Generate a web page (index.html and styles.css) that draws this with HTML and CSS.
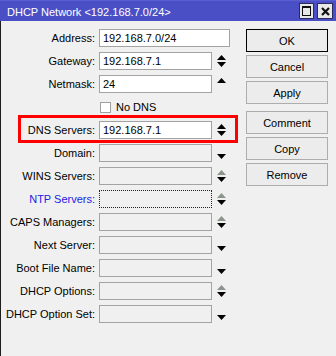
FILE: index.html
```html
<!DOCTYPE html>
<html lang="en">
<head>
    <meta charset="UTF-8">
    <title>DHCP Network</title>
    <link rel="stylesheet" href="styles.css">
</head>
<body>

    <div class="window">
        <div class="titlebar">
            <span class="title">DHCP Network &lt;192.168.7.0/24&gt;</span>
            <div class="title-buttons">
                <span class="tbtn"><span class="max-icon"></span></span>
                <span class="tbtn">
                    <svg width="9" height="9" viewBox="0 0 9 9"><path d="M1 1 L8 8 M8 1 L1 8" stroke="#111" stroke-width="2.2"/></svg>
                </span>
            </div>
        </div>

        <div class="content">
            <div class="form">
                <div class="row">
                    <label>Address:</label>
                    <div class="field wide">192.168.7.0/24</div>
                </div>
                <div class="row">
                    <label>Gateway:</label>
                    <div class="field">192.168.7.1</div>
                    <div class="arrows"><svg width="9" height="13" viewBox="0 0 9 13"><polygon points="0,5 4.5,0 9,5" fill="#000"/><polygon points="0,7 9,7 4.5,12" fill="#000"/></svg></div>
                </div>
                <div class="row">
                    <label>Netmask:</label>
                    <div class="field">24</div>
                    <div class="arrows"><svg width="9" height="13" viewBox="0 0 9 13"><polygon points="0,5 4.5,0 9,5" fill="#000"/></svg></div>
                </div>
                <div class="row">
                    <label></label>
                    <div class="check"><span class="box"></span>No DNS</div>
                </div>
                <div class="row">
                    <label>DNS Servers:</label>
                    <div class="field">192.168.7.1</div>
                    <div class="arrows"><svg width="9" height="13" viewBox="0 0 9 13"><polygon points="0,5 4.5,0 9,5" fill="#000"/><polygon points="0,7 9,7 4.5,12" fill="#000"/></svg></div>
                </div>
                <div class="row">
                    <label>Domain:</label>
                    <div class="field empty"></div>
                    <div class="arrows"><svg width="9" height="13" viewBox="0 0 9 13"><polygon points="0,7 9,7 4.5,12" fill="#000"/></svg></div>
                </div>
                <div class="row">
                    <label>WINS Servers:</label>
                    <div class="field empty"></div>
                    <div class="arrows"><svg width="9" height="13" viewBox="0 0 9 13"><polygon points="0,5 4.5,0 9,5" fill="#8c958c"/><polygon points="0,7 9,7 4.5,12" fill="#000"/></svg></div>
                </div>
                <div class="row">
                    <label class="link">NTP Servers:</label>
                    <div class="field empty focus"></div>
                    <div class="arrows"><svg width="9" height="13" viewBox="0 0 9 13"><polygon points="0,5 4.5,0 9,5" fill="#8c958c"/><polygon points="0,7 9,7 4.5,12" fill="#000"/></svg></div>
                </div>
                <div class="row">
                    <label>CAPS Managers:</label>
                    <div class="field empty"></div>
                    <div class="arrows"><svg width="9" height="13" viewBox="0 0 9 13"><polygon points="0,5 4.5,0 9,5" fill="#8c958c"/><polygon points="0,7 9,7 4.5,12" fill="#000"/></svg></div>
                </div>
                <div class="row">
                    <label>Next Server:</label>
                    <div class="field empty"></div>
                    <div class="arrows"><svg width="9" height="13" viewBox="0 0 9 13"><polygon points="0,7 9,7 4.5,12" fill="#000"/></svg></div>
                </div>
                <div class="row">
                    <label>Boot File Name:</label>
                    <div class="field empty"></div>
                    <div class="arrows"><svg width="9" height="13" viewBox="0 0 9 13"><polygon points="0,7 9,7 4.5,12" fill="#000"/></svg></div>
                </div>
                <div class="row">
                    <label>DHCP Options:</label>
                    <div class="field empty"></div>
                    <div class="arrows"><svg width="9" height="13" viewBox="0 0 9 13"><polygon points="0,5 4.5,0 9,5" fill="#8c958c"/><polygon points="0,7 9,7 4.5,12" fill="#000"/></svg></div>
                </div>
                <div class="row">
                    <label>DHCP Option Set:</label>
                    <div class="field empty"></div>
                    <div class="arrows"><svg width="9" height="13" viewBox="0 0 9 13"><polygon points="0,7 9,7 4.5,12" fill="#000"/></svg></div>
                </div>
            </div>

            <div class="buttons">
                <div class="btn default">OK</div>
                <div class="btn">Cancel</div>
                <div class="btn">Apply</div>
                <div class="btn spaced">Comment</div>
                <div class="btn">Copy</div>
                <div class="btn">Remove</div>
            </div>
        </div>

        <!-- red annotation round the DNS row -->
        <div class="highlight"></div>
    </div>

</body>
</html>
```

FILE: styles.css
```css
body {
    margin: 0;
    width: 336px;
    height: 356px;
    overflow: hidden;
    background-color: #f0f0f0;
    font-family: "Liberation Sans", Arial, sans-serif;
    font-size: 11px;
    color: #000;
}

.window {
    position: relative;
    height: 356px;
}

.titlebar {
    height: 21px;
    background-color: #4b4fc6;
    border-top: 1px solid #5a5ed0;
    box-sizing: border-box;
    display: flex;
    align-items: center;
    justify-content: space-between;
    padding: 0 3px 0 7px;
}

.title {
    color: #fff;
    font-size: 11px;
    padding-top: 1px;
}

.title-buttons {
    display: flex;
    gap: 3px;
}

.tbtn {
    width: 13px;
    height: 14px;
    background-color: #e8e8e8;
    border: 1px solid #2c2c5c;
    display: flex;
    align-items: center;
    justify-content: center;
}

.tbtn + .tbtn {
    width: 14px;
}

.max-icon {
    width: 7px;
    height: 7px;
    border: 1px solid #111;
    border-top-width: 2px;
}

.content {
    display: flex;
    border-left: 1px solid #1e1e1e;
    height: 335px;
    box-sizing: border-box;
    padding-top: 8px;
}

.form {
    display: flex;
    flex-direction: column;
    gap: 5px;
}

.row {
    display: flex;
    align-items: center;
    height: 18px;
}

.row label {
    width: 94px;
    margin-right: 4px;
    text-align: right;
    white-space: nowrap;
}

.row label.link {
    color: #2121e6;
}

.field {
    width: 113px;
    height: 18px;
    box-sizing: border-box;
    background-color: #fff;
    border: 1px solid #a3a3a3;
    padding: 2px 3px 0;
    white-space: nowrap;
}

.field.wide {
    width: 131px;
}

.field.empty {
    background-color: #f0f0f0;
}

.field.focus {
    border: 1px dotted #222;
}

.arrows {
    width: 18px;
    display: flex;
    justify-content: center;
}

.arrows svg {
    display: block;
    margin-left: 1px;
}

.check {
    display: flex;
    align-items: center;
    gap: 5px;
    margin-left: 1px;
}

.check .box {
    width: 11px;
    height: 11px;
    box-sizing: border-box;
    background-color: #fff;
    border: 1px solid #a0a0a0;
}

.buttons {
    display: flex;
    flex-direction: column;
    gap: 3px;
    margin-left: 16px;
}

.btn {
    width: 82px;
    height: 23px;
    box-sizing: border-box;
    border: 1px solid #adadad;
    background-color: #ececec;
    display: flex;
    align-items: center;
    justify-content: center;
}

.btn.default {
    border-color: #000;
}

.btn.spaced {
    margin-top: 4px;
}

.highlight {
    position: absolute;
    left: 18px;
    top: 115px;
    width: 220px;
    height: 28px;
    box-sizing: border-box;
    border: 3px solid #ff0000;
}
```
